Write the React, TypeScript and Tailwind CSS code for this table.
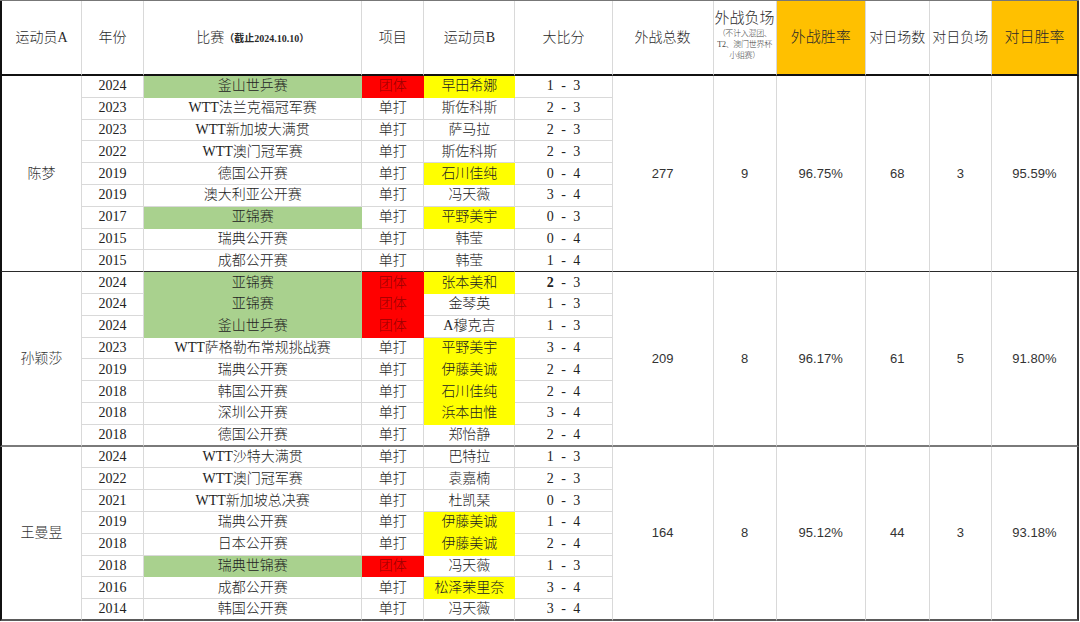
import React from 'react';

type Fill = 'green' | 'red' | 'yellow' | undefined;

interface Match {
  year: string;
  event: string;
  eventFill?: Fill;
  kind: string;
  kindFill?: Fill;
  opp: string;
  oppFill?: Fill;
  score: string;
  boldFirst?: boolean;
}

interface Block {
  name: string;
  stats: string[];
  bottom: string;
  matches: Match[];
}

const blocks: Block[] = [
  {
    name: '陈梦',
    stats: ['277', '9', '96.75%', '68', '3', '95.59%'],
    bottom: 'border-b border-b-[#2a2a2a]',
    matches: [
      { year: '2024', event: '釜山世乒赛', eventFill: 'green', kind: '团体', kindFill: 'red', opp: '早田希娜', oppFill: 'yellow', score: '1 - 3' },
      { year: '2023', event: 'WTT法兰克福冠军赛', kind: '单打', opp: '斯佐科斯', score: '2 - 3' },
      { year: '2023', event: 'WTT新加坡大满贯', kind: '单打', opp: '萨马拉', score: '2 - 3' },
      { year: '2022', event: 'WTT澳门冠军赛', kind: '单打', opp: '斯佐科斯', score: '2 - 3' },
      { year: '2019', event: '德国公开赛', kind: '单打', opp: '石川佳纯', oppFill: 'yellow', score: '0 - 4' },
      { year: '2019', event: '澳大利亚公开赛', kind: '单打', opp: '冯天薇', score: '3 - 4' },
      { year: '2017', event: '亚锦赛', eventFill: 'green', kind: '单打', opp: '平野美宇', oppFill: 'yellow', score: '0 - 3' },
      { year: '2015', event: '瑞典公开赛', kind: '单打', opp: '韩莹', score: '0 - 4' },
      { year: '2015', event: '成都公开赛', kind: '单打', opp: '韩莹', score: '1 - 4' },
    ],
  },
  {
    name: '孙颖莎',
    stats: ['209', '8', '96.17%', '61', '5', '91.80%'],
    bottom: 'border-b-2 border-b-[#7a7a7a]',
    matches: [
      { year: '2024', event: '亚锦赛', eventFill: 'green', kind: '团体', kindFill: 'red', opp: '张本美和', oppFill: 'yellow', score: '2 - 3', boldFirst: true },
      { year: '2024', event: '亚锦赛', eventFill: 'green', kind: '团体', kindFill: 'red', opp: '金琴英', score: '1 - 3' },
      { year: '2024', event: '釜山世乒赛', eventFill: 'green', kind: '团体', kindFill: 'red', opp: 'A穆克吉', score: '1 - 3' },
      { year: '2023', event: 'WTT萨格勒布常规挑战赛', kind: '单打', opp: '平野美宇', oppFill: 'yellow', score: '3 - 4' },
      { year: '2019', event: '瑞典公开赛', kind: '单打', opp: '伊藤美诚', oppFill: 'yellow', score: '2 - 4' },
      { year: '2018', event: '韩国公开赛', kind: '单打', opp: '石川佳纯', oppFill: 'yellow', score: '2 - 4' },
      { year: '2018', event: '深圳公开赛', kind: '单打', opp: '浜本由惟', oppFill: 'yellow', score: '3 - 4' },
      { year: '2018', event: '德国公开赛', kind: '单打', opp: '郑怡静', score: '2 - 4' },
    ],
  },
  {
    name: '王曼昱',
    stats: ['164', '8', '95.12%', '44', '3', '93.18%'],
    bottom: 'border-b-2 border-b-[#5a5a5a]',
    matches: [
      { year: '2024', event: 'WTT沙特大满贯', kind: '单打', opp: '巴特拉', score: '1 - 3' },
      { year: '2022', event: 'WTT澳门冠军赛', kind: '单打', opp: '袁嘉楠', score: '2 - 3' },
      { year: '2021', event: 'WTT新加坡总决赛', kind: '单打', opp: '杜凯琹', score: '0 - 3' },
      { year: '2019', event: '瑞典公开赛', kind: '单打', opp: '伊藤美诚', oppFill: 'yellow', score: '1 - 4' },
      { year: '2018', event: '日本公开赛', kind: '单打', opp: '伊藤美诚', oppFill: 'yellow', score: '2 - 4' },
      { year: '2018', event: '瑞典世锦赛', eventFill: 'green', kind: '团体', kindFill: 'red', opp: '冯天薇', score: '1 - 3' },
      { year: '2016', event: '成都公开赛', kind: '单打', opp: '松泽茉里奈', oppFill: 'yellow', score: '3 - 4' },
      { year: '2014', event: '韩国公开赛', kind: '单打', opp: '冯天薇', score: '3 - 4' },
    ],
  },
];

const widths = [82, 62, 218, 62, 91, 97, 101, 63, 89, 64, 62, 87];

const fillClass = (fill: Fill) => {
  if (fill === 'green') return 'bg-[#a9d18e] border-r-[#a9d18e] border-b-[#a9d18e]';
  if (fill === 'red') return 'bg-[#ff0000] border-r-[#ff0000] border-b-[#ff0000] text-[#9a0000]';
  if (fill === 'yellow') return 'bg-[#ffff00] border-r-[#ffff00] border-b-[#ffff00]';
  return '';
};

const serif = 'font-["Liberation_Serif","Noto_Sans_CJK_SC",serif]';
const sans = 'font-["Liberation_Sans","Noto_Sans_CJK_SC",sans-serif]';

export default function App() {
  const cell = 'border-r border-b border-[#d9d9d9] text-center align-middle p-0 whitespace-nowrap font-light';
  const head = `${cell} border-b-2 border-b-[#111] text-[14px] text-[#2a2a2a]`;

  return (
    <div className={`w-[1080px] h-[622px] bg-white overflow-hidden text-[#222] ${serif}`}>
      <table className="table-fixed border-separate border-spacing-0 w-[1079px] border-t border-t-[#777]">
        <colgroup>
          {widths.map((w, i) => (
            <col key={i} style={{ width: w }} />
          ))}
        </colgroup>
        <thead>
          <tr className="h-[75px]">
            <th className={`${head} border-l-2 border-l-[#111]`}>运动员A</th>
            <th className={head}>年份</th>
            <th className={head}>
              比赛<span className="text-[10px] font-bold">（截止2024.10.10）</span>
            </th>
            <th className={head}>项目</th>
            <th className={head}>运动员B</th>
            <th className={head}>大比分</th>
            <th className={head}>外战总数</th>
            <th className={`${head} align-top pt-[8px]`}>
              <div className="text-[15px] leading-[18px]">外战负场</div>
              <div className="text-[8px] leading-[11px] mt-[1px] text-[#444] tracking-[-0.3px]">
                （不计入混团、
                <br />
                T2、澳门世界杯
                <br />
                小组赛）
              </div>
            </th>
            <th className={`${head} bg-[#ffc000] text-[15px]`}>外战胜率</th>
            <th className={head}>对日场数</th>
            <th className={head}>对日负场</th>
            <th className={`${head} bg-[#ffc000] text-[15px] border-r-2 border-r-[#333]`}>对日胜率</th>
          </tr>
        </thead>
        <tbody>
          {blocks.map((b) =>
            b.matches.map((m, i) => {
              const last = i === b.matches.length - 1;
              const bot = last ? b.bottom : '';
              const td = `${cell} text-[14px] leading-none ${bot}`;
              return (
                <tr key={b.name + i} className="h-[21.8px]">
                  {i === 0 && (
                    <td rowSpan={b.matches.length} className={`${cell} ${b.bottom} border-l-2 border-l-[#111] text-[14px] text-[#333]`}>
                      {b.name}
                    </td>
                  )}
                  <td className={td}>{m.year}</td>
                  <td className={`${td} ${fillClass(m.eventFill)}`}>{m.event}</td>
                  <td className={`${td} ${fillClass(m.kindFill)}`}>{m.kind}</td>
                  <td className={`${td} ${fillClass(m.oppFill)}`}>{m.opp}</td>
                  <td className={`${td} [word-spacing:4px]`}>
                    {m.boldFirst ? (
                      <>
                        <b className="font-bold">{m.score[0]}</b>
                        {m.score.slice(1)}
                      </>
                    ) : (
                      m.score
                    )}
                  </td>
                  {i === 0 &&
                    b.stats.map((s, k) => (
                      <td
                        key={k}
                        rowSpan={b.matches.length}
                        className={`${cell} ${b.bottom} ${sans} text-[13px] text-[#333] ${k === 5 ? 'border-r-2 border-r-[#333]' : ''}`}
                      >
                        {s}
                      </td>
                    ))}
                </tr>
              );
            })
          )}
        </tbody>
      </table>
    </div>
  );
}
